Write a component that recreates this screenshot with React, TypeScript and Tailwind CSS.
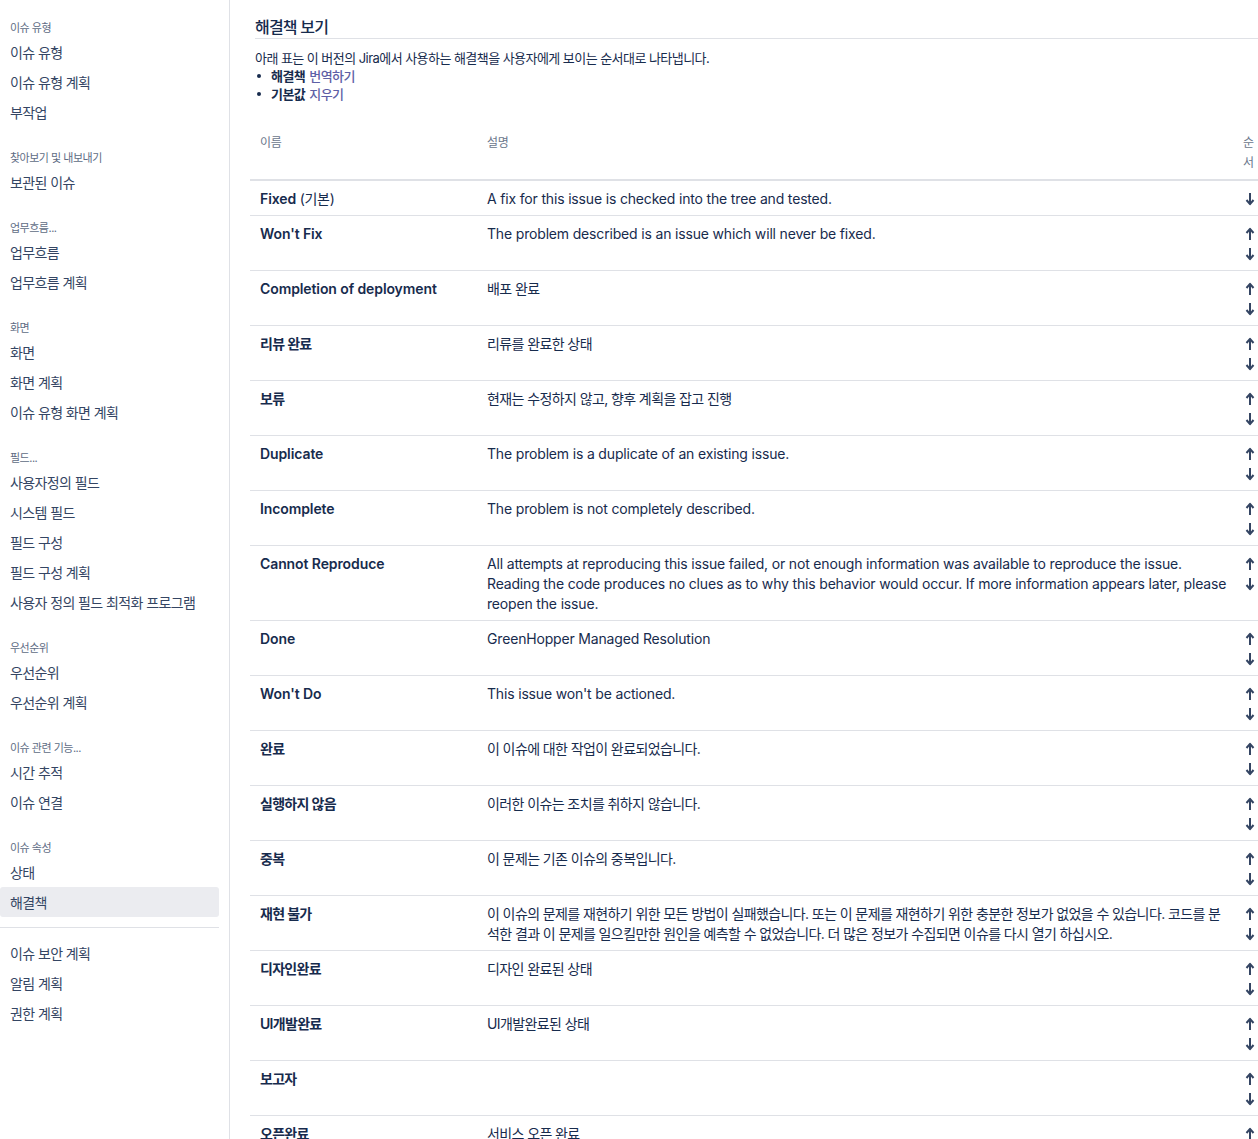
import React from "react";

type NavGroup = { title: string; items: string[] };

const NAV: NavGroup[] = [
  { title: "이슈 유형", items: ["이슈 유형", "이슈 유형 계획", "부작업"] },
  { title: "찾아보기 및 내보내기", items: ["보관된 이슈"] },
  { title: "업무흐름...", items: ["업무흐름", "업무흐름 계획"] },
  { title: "화면", items: ["화면", "화면 계획", "이슈 유형 화면 계획"] },
  {
    title: "필드...",
    items: ["사용자정의 필드", "시스템 필드", "필드 구성", "필드 구성 계획", "사용자 정의 필드 최적화 프로그램"],
  },
  { title: "우선순위", items: ["우선순위", "우선순위 계획"] },
  { title: "이슈 관련 기능...", items: ["시간 추적", "이슈 연결"] },
  { title: "이슈 속성", items: ["상태", "해결책"] },
];

const EXTRA = ["이슈 보안 계획", "알림 계획", "권한 계획"];

interface Resolution {
  name: string;
  isDefault?: boolean;
  description: string;
}

const ROWS: Resolution[] = [
  { name: "Fixed", isDefault: true, description: "A fix for this issue is checked into the tree and tested." },
  { name: "Won't Fix", description: "The problem described is an issue which will never be fixed." },
  { name: "Completion of deployment", description: "배포 완료" },
  { name: "리뷰 완료", description: "리류를 완료한 상태" },
  { name: "보류", description: "현재는 수정하지 않고, 향후 계획을 잡고 진행" },
  { name: "Duplicate", description: "The problem is a duplicate of an existing issue." },
  { name: "Incomplete", description: "The problem is not completely described." },
  {
    name: "Cannot Reproduce",
    description:
      "All attempts at reproducing this issue failed, or not enough information was available to reproduce the issue. Reading the code produces no clues as to why this behavior would occur. If more information appears later, please reopen the issue.",
  },
  { name: "Done", description: "GreenHopper Managed Resolution" },
  { name: "Won't Do", description: "This issue won't be actioned." },
  { name: "완료", description: "이 이슈에 대한 작업이 완료되었습니다." },
  { name: "실행하지 않음", description: "이러한 이슈는 조치를 취하지 않습니다." },
  { name: "중복", description: "이 문제는 기존 이슈의 중복입니다." },
  {
    name: "재현 불가",
    description:
      "이 이슈의 문제를 재현하기 위한 모든 방법이 실패했습니다. 또는 이 문제를 재현하기 위한 충분한 정보가 없었을 수 있습니다. 코드를 분석한 결과 이 문제를 일으킬만한 원인을 예측할 수 없었습니다. 더 많은 정보가 수집되면 이슈를 다시 열기 하십시오.",
  },
  { name: "디자인완료", description: "디자인 완료된 상태" },
  { name: "UI개발완료", description: "UI개발완료된 상태" },
  { name: "보고자", description: "" },
  { name: "오픈완료", description: "서비스 오픈 완료" },
];

const hasKo = (s: string) => /[가-힣]/.test(s);

function Arrow({ up }: { up?: boolean }) {
  return (
    <svg width="10" height="20" viewBox="0 0 10 20" className="block" aria-hidden>
      {up ? (
        <>
          <path d="M5 5.5 V16" stroke="#344563" strokeWidth="2" />
          <path d="M1.5 9 L5 4.8 L8.5 9" fill="none" stroke="#344563" strokeWidth="2" strokeLinejoin="round" />
        </>
      ) : (
        <>
          <path d="M5 4 V14.5" stroke="#344563" strokeWidth="2" />
          <path d="M1.5 11 L5 15.2 L8.5 11" fill="none" stroke="#344563" strokeWidth="2" strokeLinejoin="round" />
        </>
      )}
    </svg>
  );
}

export default function App() {
  const font = { fontFamily: '"Inter", "Noto Sans CJK KR", sans-serif' };
  return (
    <div className="w-[1258px] min-h-[1139px] flex bg-white text-[#172b4d] overflow-hidden" style={font}>
      {/* Sidebar */}
      <aside className="w-[230px] shrink-0 border-r border-[#dfe1e6] pr-[10px] pt-[17px]">
        {NAV.map((g, gi) => (
          <div key={g.title} className={gi > 0 ? "mt-[20px]" : ""}>
            <div className="h-[20px] pt-[2px] px-[10px] flex items-center text-[11px] tracking-[-0.5px] text-[#5e6c84]">
              {g.title}
            </div>
            {g.items.map((it) => (
              <div
                key={it}
                className={`h-[30px] px-[10px] flex items-center text-[14px] tracking-[-0.6px] text-[#344563] rounded-[3px] ${
                  it === "해결책" ? "bg-[#ebecf0]" : ""
                }`}
              >
                {it}
              </div>
            ))}
          </div>
        ))}
        <div className="mt-[10px] mb-[10px] border-t border-[#dfe1e6]" />
        {EXTRA.map((it) => (
          <div key={it} className="h-[30px] px-[10px] flex items-center text-[14px] tracking-[-0.6px] text-[#344563]">
            {it}
          </div>
        ))}
      </aside>

      {/* Main */}
      <main className="flex-1 min-w-0 overflow-hidden pl-[20px] pt-[17px]">
        <div className="ml-[5px]">
          <h2 className="text-[16px] font-medium tracking-[-0.8px] leading-[21px] border-b border-[#dfe1e6]">해결책 보기</h2>
          <p className="text-[13px] tracking-[-0.55px] leading-[18px] mt-[10px]">
            아래 표는 이 버전의 Jira에서 사용하는 해결책을 사용자에게 보이는 순서대로 나타냅니다.
          </p>
          <ul className="text-[13px] tracking-[-0.55px] leading-[18px]">
            <li className="flex items-center">
              <span className="ml-[2px] mr-[10px] w-[4px] h-[4px] rounded-full bg-[#172b4d]" />
              <span className="font-semibold">해결책</span>
              <span className="ml-[4px] font-medium text-[#5e60a6]">번역하기</span>
            </li>
            <li className="flex items-center">
              <span className="ml-[2px] mr-[10px] w-[4px] h-[4px] rounded-full bg-[#172b4d]" />
              <span className="font-semibold">기본값</span>
              <span className="ml-[4px] font-medium text-[#5e60a6]">지우기</span>
            </li>
          </ul>
        </div>

        <table className="mt-[21px] table-fixed border-collapse w-[1023px]">
          <colgroup>
            <col className="w-[227px]" />
            <col className="w-[760px]" />
            <col className="w-[36px]" />
          </colgroup>
          <thead>
            <tr className="border-b-2 border-[#dfe1e6]">
              <th className="px-[10px] pt-[9px] pb-[6px] text-left align-top text-[12px] font-normal leading-[20px] tracking-[-0.4px] text-[#6b778c]">
                이름
              </th>
              <th className="px-[10px] pt-[9px] pb-[6px] text-left align-top text-[12px] font-normal leading-[20px] tracking-[-0.4px] text-[#6b778c]">
                설명
              </th>
              <th className="pl-[6px] pt-[9px] pb-[6px] text-left align-top text-[12px] font-normal leading-[20px] text-[#6b778c]">
                <span className="block w-[14px]">순서</span>
              </th>
            </tr>
          </thead>
          <tbody>
            {ROWS.map((r, i) => (
              <tr key={r.name} className="border-b border-[#dfe1e6]">
                <td
                  className={`px-[10px] pt-[8px] pb-[6px] align-top text-[14px] leading-[20px] ${
                    hasKo(r.name) ? "tracking-[-0.7px]" : "tracking-[-0.1px]"
                  }`}
                >
                  <span className="font-semibold">{r.name}</span>
                  {r.isDefault && <span className="tracking-[-0.3px]"> (기본)</span>}
                </td>
                <td
                  className={`px-[10px] pt-[8px] pb-[6px] align-top text-[14px] leading-[20px] ${
                    hasKo(r.description) ? "tracking-[-0.6px]" : "tracking-[-0.17px]"
                  }`}
                >
                  {r.description}
                </td>
                <td className="pl-[8px] pt-[8px] pb-[6px] align-top">
                  {i > 0 && <Arrow up />}
                  <Arrow />
                </td>
              </tr>
            ))}
          </tbody>
        </table>
      </main>
    </div>
  );
}
